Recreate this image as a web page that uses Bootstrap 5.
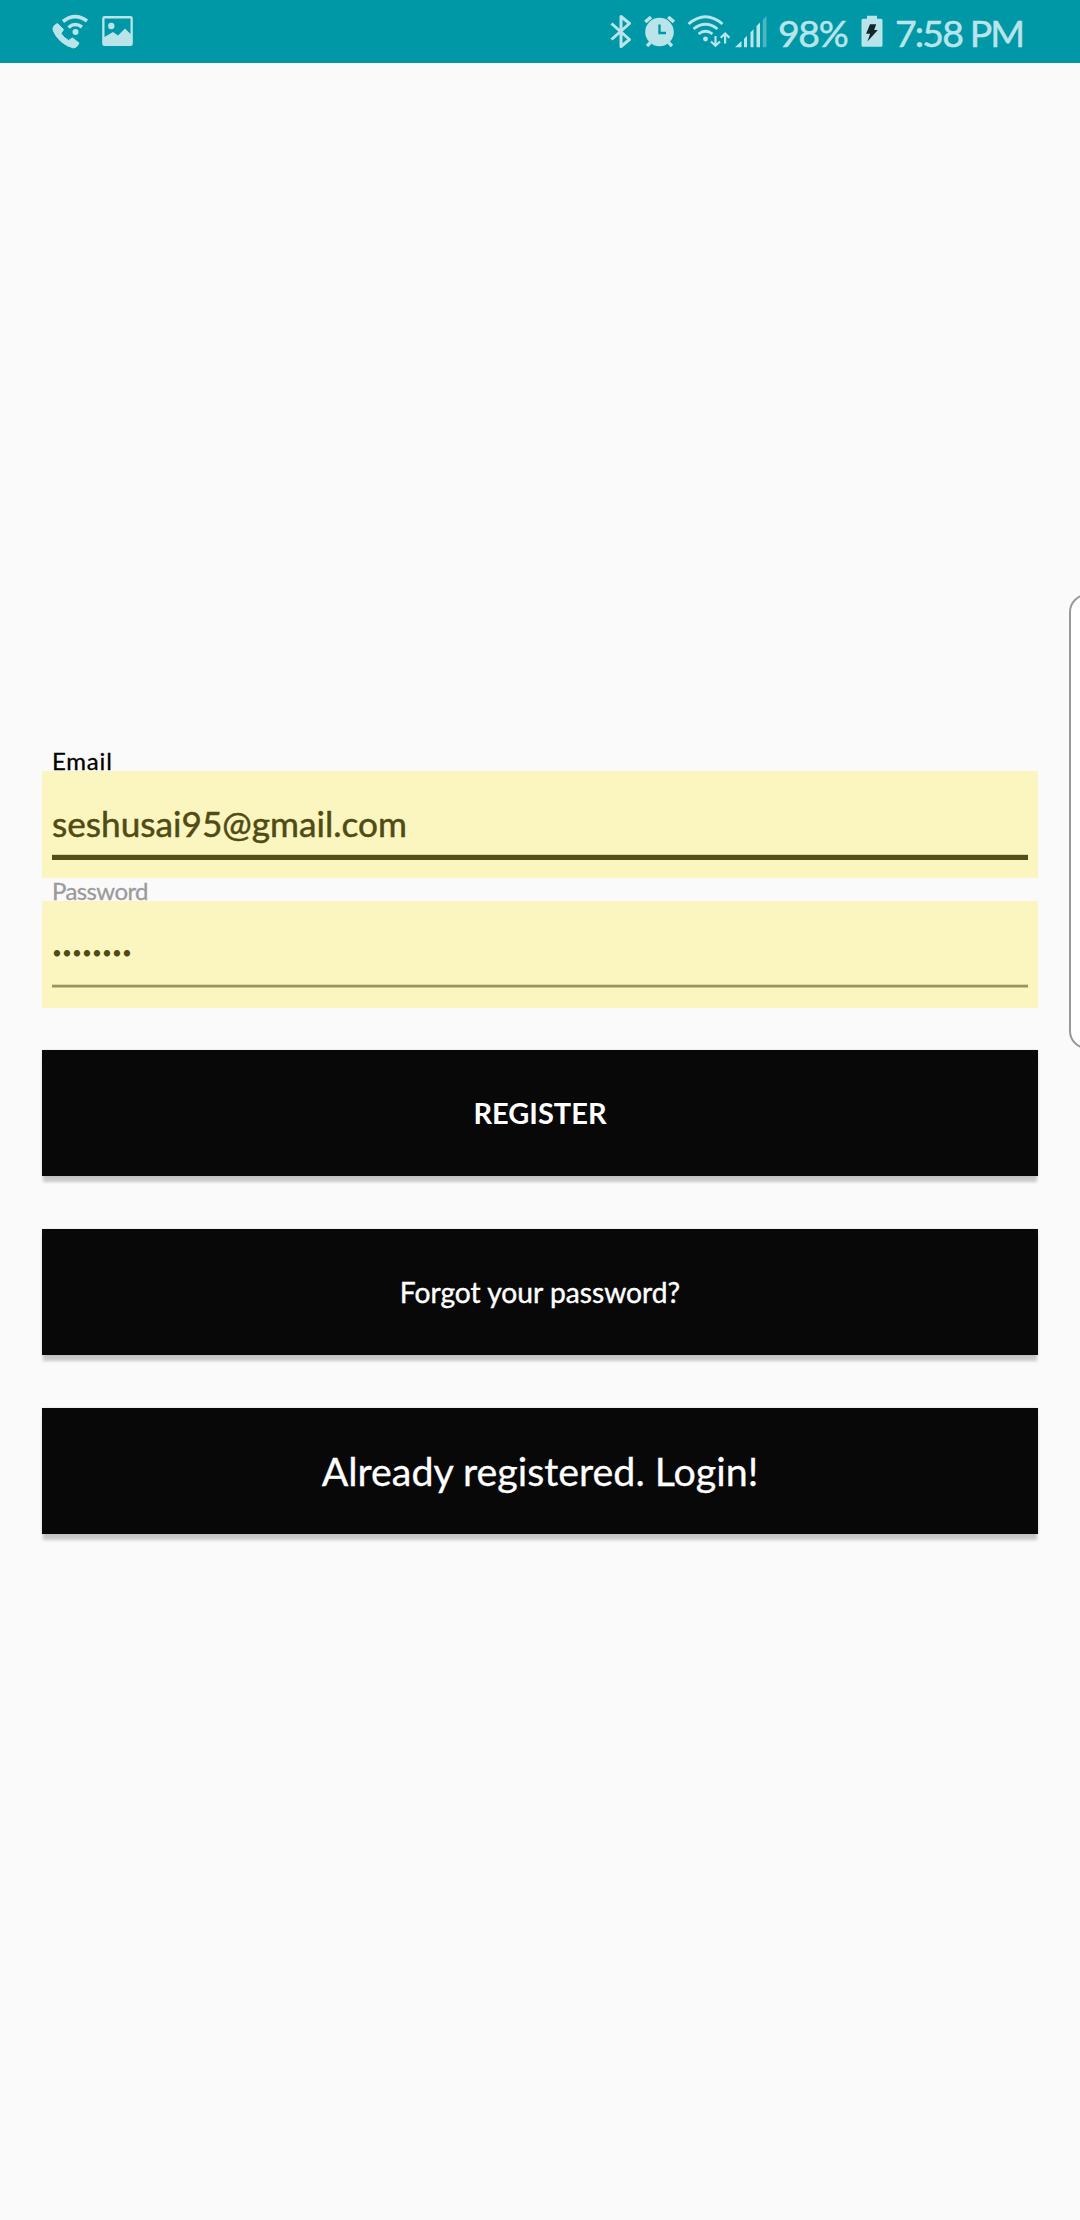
<!DOCTYPE html>
<html lang="en">
<head>
<meta charset="utf-8">
<meta name="viewport" content="width=device-width, initial-scale=1">
<title>Register</title>
<link href="https://cdn.jsdelivr.net/npm/bootstrap@5.3.0/dist/css/bootstrap.min.css" rel="stylesheet">
<style>
body{background:#fafafa;font-family:Lato,"Open Sans",sans-serif;height:2220px;overflow:hidden}
.status-bar{height:63px;background:#0097a7;color:#b9e5ea;padding:0 54px 0 52px}
.status-bar svg{display:block;flex:none}
.status-text{font-size:37.5px;line-height:63px;white-space:nowrap;padding-top:1px;-webkit-text-stroke:.5px currentColor}
.pct{width:73px;letter-spacing:-1.4px;margin-left:11.5px}
.clock{width:131px;letter-spacing:-1.9px;margin-left:12px}
.gap-photo{margin-left:13px}
.gap-icon{margin-left:12px}
.gap-signal{margin-left:5px}
.gap-battery{margin-left:10px}
.sign-form{padding:685px 42px 0}
.field-label{display:block;height:23px;line-height:26px;font-size:24px;padding-left:10px;margin:0;-webkit-text-stroke:.3px currentColor}
.label-email{letter-spacing:.8px}
.label-pass{letter-spacing:-.6px;color:#9b9b9b}
.field-box{height:107px;background:#fbf6c0;padding:0 10px}
.field-box .form-control,.field-box .form-control:focus{background:transparent;color:#504b14;border:0;border-radius:0;padding:19px 0 0}
.field-box .email-input,.field-box .email-input:focus{height:89px;font-size:35.2px;line-height:44px;border-bottom:5px solid #544f17;box-shadow:inset 0 -1px #dcd7a0;-webkit-text-stroke:.5px currentColor}
.field-box .pass-input,.field-box .pass-input:focus{height:86px;font-size:17px;line-height:24px;letter-spacing:.14px;border-bottom:2px solid #99945a;box-shadow:inset 0 -1px #dcd7a0,0 1px #cac58c}
.action-list{row-gap:53px;margin-top:42px}
.btn-flat,.btn-flat:hover{height:126px;background:#080808;color:#fff;border:0;border-radius:0;padding:0;box-shadow:0 7px 3px -1px rgba(0,0,0,.2),0 0 2px rgba(0,0,0,.12)}
.fs-register{font-size:29px;line-height:36px}
.fs-forgot{font-size:28.2px;line-height:36px;-webkit-text-stroke:.4px currentColor}
.fs-login{font-size:39.4px;line-height:48px;-webkit-text-stroke:.3px currentColor}
.edge-panel{top:594px;left:1069px;width:40px;height:455px;background:#fff;border:2px solid #999;border-radius:18px}
</style>
</head>
<body class="position-relative">
<header class="status-bar d-flex align-items-center">
  <svg width="37" height="63" viewBox="52 0 37 63" fill="none" stroke="currentColor">
    <path d="M57.500 23.500q-5 2-4.500 6.500 2 6 8 11.500q6 5 12.500 6.500 4-.5 5.500-5l-6.500-5-4 2.500q-5-3-7.500-7l2.500-4z" fill="currentColor" stroke-width="1" stroke-linejoin="round"/>
    <circle cx="75.500" cy="32" r="3" fill="currentColor" stroke="none"/>
    <path d="M68.500 27.500q6.500-5.500 13.500-.5" stroke-width="3.400"/>
    <path d="M63 21.500q12-9.500 24-.5" stroke-width="3.600"/>
  </svg>
  <svg class="gap-photo" width="31" height="63" viewBox="102 0 31 63">
    <path fill="currentColor" fill-rule="evenodd" d="M104.500 16h26a2.300 2.300 0 0 1 2.300 2.300v25.400a2.300 2.300 0 0 1-2.300 2.300h-26a2.300 2.300 0 0 1-2.300-2.300V18.300a2.300 2.300 0 0 1 2.300-2.300zM104.500 18.500V37l8.500-5 5 3.500 7-7 5.500 5.500V18.500z"/>
    <circle cx="111.300" cy="26" r="3.200" fill="currentColor"/>
  </svg>
  <svg class="ms-auto" width="22" height="63" viewBox="610.500 0 22 63" fill="none" stroke="currentColor" stroke-width="3" stroke-linejoin="round">
    <path d="M612 23.500 630 39.500 621.500 46.500V16.500L630 23.500 612 39.500"/>
  </svg>
  <svg class="gap-icon" width="31" height="63" viewBox="644.500 0 31 63" fill="none" stroke="currentColor">
    <circle cx="660" cy="32" r="14.300" fill="currentColor" stroke="none"/>
    <path d="M645.800 22 651.500 17M668.700 17 674.500 22" stroke-width="3.600"/>
    <path d="M651 42.500 647.500 46M669 42.500 672.500 46" stroke-width="3.200"/>
    <path d="M660 24.500V33h6.500" stroke="#0097a7" stroke-width="2.400"/>
  </svg>
  <svg class="gap-icon" width="43" height="63" viewBox="687.500 0 43 63" fill="none" stroke="currentColor" stroke-width="2.800">
    <path d="M689 24q17-14.500 34 0M694 29q12-9.500 24 0M699 34q7-5.500 14 0"/>
    <circle cx="706" cy="39" r="2.400" fill="currentColor" stroke="none"/>
    <path d="M716 36v9M711.500 41.500l4.500 4.300 4.500-4.300M725.600 43.500v-9.500M721.200 37.800l4.400-4.200 4.400 4.200" stroke-width="2.200"/>
  </svg>
  <svg class="gap-signal" width="32" height="63" viewBox="735.500 0 32 63" fill="currentColor">
    <path d="M735.500 47.300 742 41v6.300zM744.500 38.700l3-3v11.600h-3zM751 32.200l3-3v18.100h-3zM757 26l3.500-3.500v24.800H757z"/>
    <path d="M763.300 19.700l3.700-3.700v31.300h-3.700z" opacity=".4"/>
  </svg>
  <span class="status-text pct">98%</span>
  <svg class="gap-battery" width="22" height="63" viewBox="861.500 0 22 63">
    <path fill="currentColor" d="M867.500 15.700h10v3h4a1.500 1.500 0 0 1 1.500 1.500v25a1.500 1.500 0 0 1-1.500 1.500h-18a1.500 1.500 0 0 1-1.500-1.500v-25a1.500 1.500 0 0 1 1.500-1.500h4z"/>
    <path fill="#10282c" d="M870.500 24.300h6.200l-2 5.700h3.600l-10.300 11.500 2.600-7.800h-4z"/>
  </svg>
  <span class="status-text clock">7:58 PM</span>
</header>

<main class="sign-form">
  <form>
    <label for="email" class="field-label label-email text-black">Email</label>
    <div class="field-box"><input id="email" type="text" class="form-control email-input" value="seshusai95@gmail.com"></div>
    <label for="password" class="field-label label-pass">Password</label>
    <div class="field-box"><input id="password" type="password" class="form-control pass-input" value="seshusai"></div>
    <div class="action-list d-grid">
      <button type="button" class="btn btn-flat fs-register fw-bold">REGISTER</button>
      <button type="button" class="btn btn-flat fs-forgot">Forgot your password?</button>
      <button type="button" class="btn btn-flat fs-login">Already registered. Login!</button>
    </div>
  </form>
</main>
<div class="edge-panel position-absolute"></div>
<script src="https://cdn.jsdelivr.net/npm/bootstrap@5.3.0/dist/js/bootstrap.bundle.min.js"></script>
</body>
</html>
